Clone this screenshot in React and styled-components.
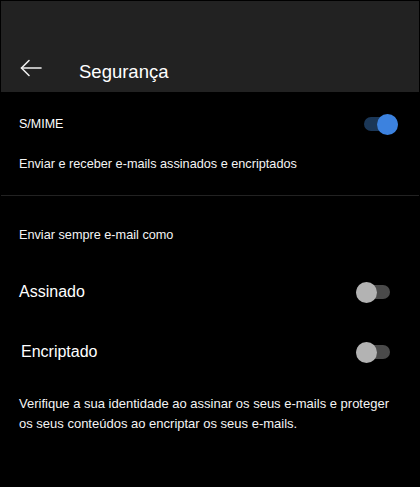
import styled, { createGlobalStyle } from 'styled-components'

const Global = createGlobalStyle`
  html, body {
    margin: 0;
    background: #000;
  }
  body {
    font-family: "Liberation Sans", Arial, sans-serif;
    color: #fff;
  }
`

const Page = styled.div`
  width: 420px;
  height: 487px;
  box-sizing: border-box;
  border: 1px solid #000;
  background: #000;
  overflow: hidden;
`

const Header = styled.header`
  height: 91px;
  background: #222;
  display: flex;
  align-items: center;
  box-sizing: border-box;
  padding: 42px 0 0 19px;
`

const BackButton = styled.button`
  background: none;
  border: 0;
  padding: 0;
  display: flex;
  width: 22px;
  height: 18px;
  cursor: pointer;
`

const Title = styled.h1`
  margin: 0 0 0 37px;
  font-size: 18.5px;
  font-weight: 400;
  color: #fff;
  padding-top: 9px;
`

const Section = styled.section`
  padding: ${(p) => p.$pad};
  border-bottom: ${(p) => (p.$divider ? '1px solid #222' : 'none')};
`

const Row = styled.div`
  display: flex;
  align-items: center;
  justify-content: space-between;
  height: ${(p) => p.$h}px;
  padding: 0 ${(p) => p.$right}px 0 ${(p) => p.$left || 18}px;
`

const Label = styled.span`
  font-size: ${(p) => p.$size || 12.5}px;
  color: #fff;
`

const Text = styled.p`
  margin: 0;
  padding: 0 18px;
  font-size: ${(p) => p.$size || 12.7}px;
  line-height: 20px;
  color: #f4f4f4;
`

const Track = styled.span`
  position: relative;
  display: inline-block;
  width: 34px;
  height: 14px;
  border-radius: 7px;
  background: ${(p) => (p.$on ? '#1b3757' : '#4a4a4a')};
`

const Thumb = styled.span`
  position: absolute;
  top: 50%;
  ${(p) => (p.$on ? 'right: 0;' : 'left: 0;')}
  width: 21px;
  height: 21px;
  margin-top: -10.5px;
  border-radius: 50%;
  background: ${(p) => (p.$on ? '#3c82df' : '#b3b3b3')};
`

function Toggle({ on }) {
  return (
    <Track $on={on}>
      <Thumb $on={on} />
    </Track>
  )
}

export default function App() {
  return (
    <Page>
      <Global />
      <Header>
        <BackButton aria-label="Voltar">
          <svg width="22" height="18" viewBox="0 0 22 18" fill="none" stroke="#eee" strokeWidth="1.6" strokeLinecap="round" strokeLinejoin="round">
            <path d="M21 9H1.5" />
            <path d="M9 1.5L1.5 9L9 16.5" />
          </svg>
        </BackButton>
        <Title>Segurança</Title>
      </Header>

      <Section $pad="12px 0 21px" $divider>
        <Row $h={40} $right={21}>
          <Label>S/MIME</Label>
          <Toggle on />
        </Row>
        <Text style={{ marginTop: 10 }}>Enviar e receber e-mails assinados e encriptados</Text>
      </Section>

      <Section $pad="29px 0 0">
        <Text>Enviar sempre e-mail como</Text>
        <Row $h={60} $right={29} style={{ marginTop: 17 }}>
          <Label $size={16}>Assinado</Label>
          <Toggle />
        </Row>
        <Row $h={60} $right={29} $left={20}>
          <Label $size={16}>Encriptado</Label>
          <Toggle />
        </Row>
        <Text $size={13} style={{ marginTop: 12 }}>
          Verifique a sua identidade ao assinar os seus e-mails e proteger os seus conteúdos ao encriptar os seus e-mails.
        </Text>
      </Section>
    </Page>
  )
}
